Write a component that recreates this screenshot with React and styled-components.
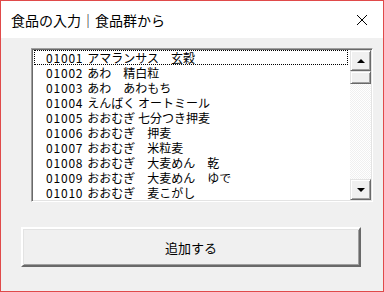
import React from "react";
import styled, { createGlobalStyle } from "styled-components";

const GlobalStyle = createGlobalStyle`
  html, body {
    margin: 0;
    padding: 0;
    background: #ffffff;
  }
  * {
    box-sizing: border-box;
  }
`;

const foods = [
  ["01001", "アマランサス　玄穀"],
  ["01002", "あわ　精白粒"],
  ["01003", "あわ　あわもち"],
  ["01004", "えんばく オートミール"],
  ["01005", "おおむぎ 七分つき押麦"],
  ["01006", "おおむぎ　押麦"],
  ["01007", "おおむぎ　米粒麦"],
  ["01008", "おおむぎ　大麦めん　乾"],
  ["01009", "おおむぎ　大麦めん　ゆで"],
  ["01010", "おおむぎ　麦こがし"],
];

const Window = styled.div`
  width: 384px;
  height: 292px;
  border: 1px solid #e04a4a;
  background: #f0f0f0;
  display: flex;
  flex-direction: column;
  font-family: "Noto Sans CJK JP", "Noto Sans", sans-serif;
`;

const TitleBar = styled.div`
  height: 37px;
  flex: none;
  background: #ffffff;
  display: flex;
  align-items: center;
  justify-content: space-between;
  padding: 0 15px 0 10px;
`;

const Title = styled.span`
  font-size: 14px;
  color: #000000;
  letter-spacing: 0;
  margin-top: 1px;
`;

const CloseIcon = styled.svg`
  width: 12px;
  height: 12px;
  display: block;
`;

const Body = styled.div`
  flex: 1;
  display: flex;
  flex-direction: column;
  padding: 10px 0 0 20px;
`;

const ListBox = styled.div`
  width: 342px;
  height: 154px;
  margin-left: 10px;
  display: flex;
  background: #ffffff;
  border-style: solid;
  border-width: 1px;
  border-color: #a0a0a0 #ffffff #ffffff #a0a0a0;
  box-shadow: inset 1px 1px 0 #696969, inset -1px -1px 0 #e3e3e3;
  padding: 1px;
`;

const Rows = styled.ul`
  flex: 1;
  margin: 0;
  padding: 0 0 0 1px;
  list-style: none;
  overflow: hidden;
`;

const Row = styled.li`
  height: 15px;
  line-height: 15px;
  font-size: 12px;
  color: #000000;
  padding-left: 12px;
  white-space: nowrap;
  outline: ${(p) => (p.$focused ? "1px dotted #000000" : "none")};
  outline-offset: -1px;
  margin-right: 2px;
`;

const Code = styled.span`
  letter-spacing: 0.8px;
  margin-right: 4px;
`;

const ScrollBar = styled.div`
  width: 21px;
  display: flex;
  flex-direction: column;
`;

const ArrowButton = styled.div`
  height: 21px;
  flex: none;
  background: #f0f0f0;
  border-style: solid;
  border-width: 1px;
  border-color: #e3e3e3 #696969 #696969 #e3e3e3;
  box-shadow: inset 1px 1px 0 #ffffff, inset -1px -1px 0 #a0a0a0;
  display: flex;
  align-items: center;
  justify-content: center;
`;

const Thumb = styled.div`
  height: 13px;
  flex: none;
  background: #f0f0f0;
  border-style: solid;
  border-width: 1px;
  border-color: #e3e3e3 #696969 #696969 #e3e3e3;
  box-shadow: inset 1px 1px 0 #ffffff, inset -1px -1px 0 #a0a0a0;
`;

const Track = styled.div`
  flex: 1;
  background: repeating-conic-gradient(#ffffff 0 25%, #f0f0f0 0 50%) 0 0 / 2px 2px;
`;

const Triangle = styled.span`
  width: 0;
  height: 0;
  border-left: 4px solid transparent;
  border-right: 4px solid transparent;
  ${(p) =>
    p.$up
      ? "border-bottom: 4px solid #000000;"
      : "border-top: 4px solid #000000;"}
`;

const AddButton = styled.button`
  width: 340px;
  height: 40px;
  margin-top: 25px;
  padding: 0;
  background: #f0f0f0;
  font-family: "Noto Sans CJK JP", "Noto Sans", sans-serif;
  font-size: 13px;
  color: #000000;
  border-style: solid;
  border-width: 2px;
  border-color: #ffffff #696969 #696969 #ffffff;
  box-shadow: inset 1px 1px 0 #e3e3e3, inset -1px -1px 0 #a0a0a0;
  outline: none;
`;

export default function App() {
  return (
    <>
      <GlobalStyle />
      <Window>
        <TitleBar>
          <Title>食品の入力｜食品群から</Title>
          <CloseIcon viewBox="0 0 12 12">
            <path d="M1 1 L11 11 M11 1 L1 11" stroke="#000000" strokeWidth="1" fill="none" />
          </CloseIcon>
        </TitleBar>
        <Body>
          <ListBox>
            <Rows>
              {foods.map(([code, name], i) => (
                <Row key={code} $focused={i === 0}>
                  <Code>{code}</Code>
                  {name}
                </Row>
              ))}
            </Rows>
            <ScrollBar>
              <ArrowButton>
                <Triangle $up />
              </ArrowButton>
              <Thumb />
              <Track />
              <ArrowButton>
                <Triangle />
              </ArrowButton>
            </ScrollBar>
          </ListBox>
          <AddButton>追加する</AddButton>
        </Body>
      </Window>
    </>
  );
}
